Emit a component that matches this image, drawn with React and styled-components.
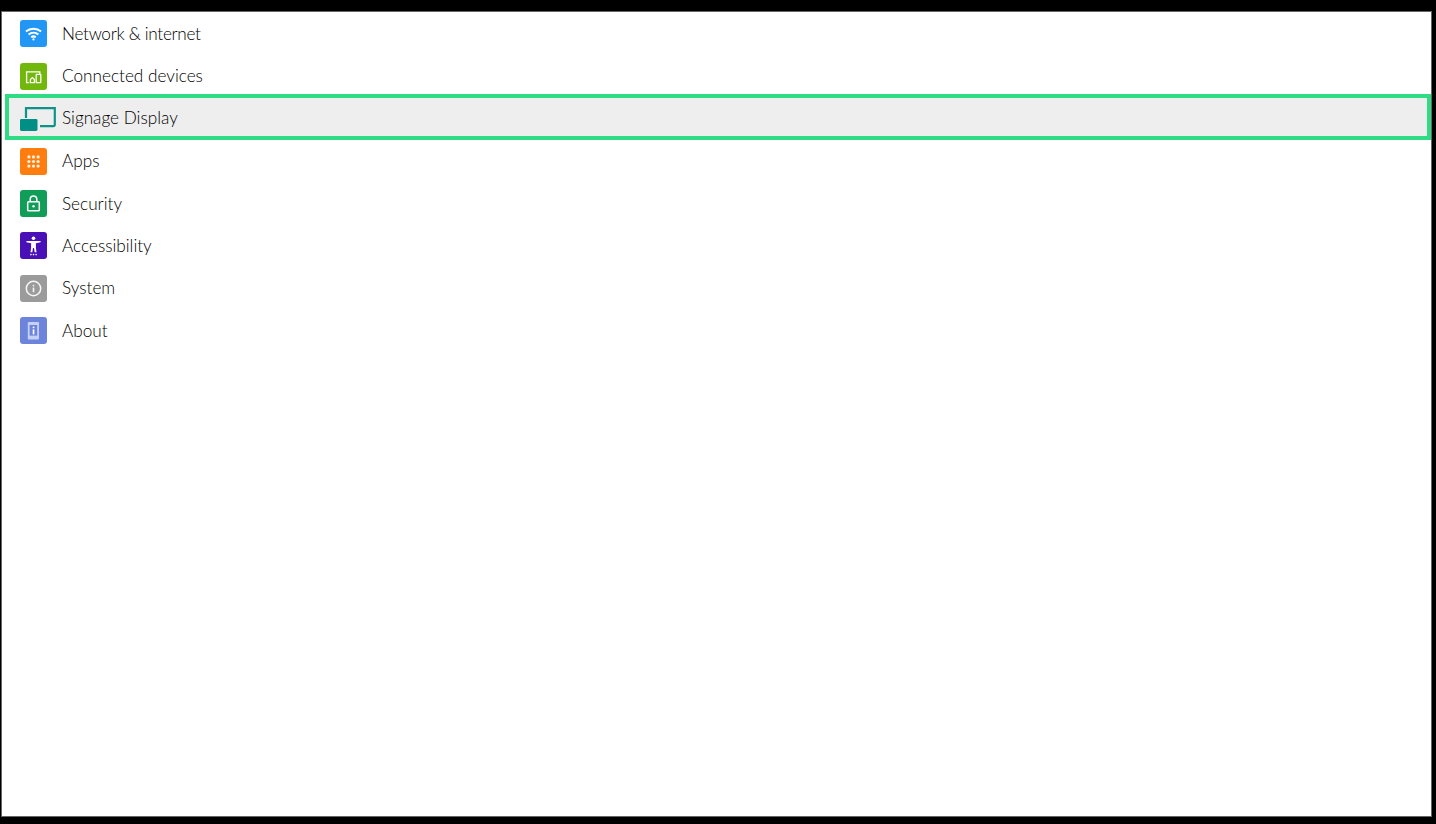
import React from 'react';
import styled, { createGlobalStyle } from 'styled-components';

const items = [
    { label: 'Network & internet', color: '#2196f5', icon: <WifiIcon />, tracking: '-0.3px' },
    { label: 'Connected devices', color: '#72b80c', icon: <DevicesIcon /> },
    { label: 'Signage Display', selected: true, icon: <SignageIcon /> },
    { label: 'Apps', color: '#ff7d0f', icon: <AppsIcon /> },
    { label: 'Security', color: '#0f9d58', icon: <LockIcon /> },
    { label: 'Accessibility', color: '#4a10b8', icon: <PersonIcon /> },
    { label: 'System', color: '#9b9b9b', icon: <InfoIcon /> },
    { label: 'About', color: '#6c84dc', icon: <PhoneIcon /> },
];

function WifiIcon() {
    return (
        <svg width="27" height="27" viewBox="0 0 27 27" fill="none" stroke="#fff" strokeWidth="2">
            <path d="M5.9 11.6c4.4-3.7 10.8-3.7 15.2 0" />
            <path d="M8.6 14.6c2.9-2.4 6.9-2.4 9.8 0" />
            <path d="M11.2 17.2c1.4-1 3.2-1 4.6 0" />
            <circle cx="13.5" cy="19.4" r="1.1" fill="#fff" stroke="none" />
        </svg>
    );
}

function DevicesIcon() {
    return (
        <svg width="27" height="27" viewBox="0 0 27 27" fill="none" stroke="#fff" strokeWidth="1.3">
            <path d="M8.8 19.6H6.6V8.9h13.2v2" />
            <rect x="16.2" y="11.4" width="4.6" height="8.3" rx=".4" />
            <path d="M10.4 19.6v-3l2-2 2 2v3z" />
        </svg>
    );
}

function SignageIcon() {
    return (
        <svg width="36" height="24" viewBox="0 0 36 24" fill="none">
            <path d="M6 11V1.1h28.8v16.4a1.6 1.6 0 0 1-1.6 1.6H20" stroke="#0e9389" strokeWidth="2.2" />
            <rect y="12" width="17.5" height="12" rx="1.4" fill="#008f84" />
        </svg>
    );
}

function AppsIcon() {
    return (
        <svg width="27" height="27" viewBox="0 0 27 27" fill="#fff0e0">
            {[8.9, 13.5, 18.1].map((y) =>
                [8.9, 13.5, 18.1].map((x) => <circle key={`${x}-${y}`} cx={x} cy={y} r="1.6" />)
            )}
        </svg>
    );
}

function LockIcon() {
    return (
        <svg width="27" height="27" viewBox="0 0 27 27" fill="none" stroke="#fff" strokeWidth="1.5">
            <rect x="7.7" y="11.7" width="11.6" height="9" rx=".8" />
            <path d="M10.2 11.7V9.2a3.3 3.3 0 0 1 6.6 0v2.5" />
            <circle cx="13.5" cy="16.2" r="1.2" fill="#fff" stroke="none" />
        </svg>
    );
}

function PersonIcon() {
    return (
        <svg width="27" height="27" viewBox="0 0 27 27" fill="#fff">
            <circle cx="13.5" cy="6.2" r="1.8" />
            <path d="M6.4 8.9h14.2v1.3l-4.7 1.1v4.4l.6 4.6h-1.8l-.7-4.4h-1l-.7 4.4h-1.8l.6-4.6v-4.4l-4.7-1.1z" />
            <circle cx="10.9" cy="22.6" r=".8" />
            <circle cx="13.5" cy="22.6" r=".8" />
            <circle cx="16.1" cy="22.6" r=".8" />
        </svg>
    );
}

function InfoIcon() {
    return (
        <svg width="27" height="27" viewBox="0 0 27 27" fill="none" stroke="#f6f6f6" strokeWidth="1.5">
            <circle cx="13.5" cy="13.5" r="7.2" />
            <circle cx="13.5" cy="10.6" r=".9" fill="#f6f6f6" stroke="none" />
            <path d="M13.5 12.6v4.6" strokeWidth="1.6" />
        </svg>
    );
}

function PhoneIcon() {
    return (
        <svg width="27" height="27" viewBox="0 0 27 27" fill="none">
            <rect x="7.8" y="5" width="11.2" height="17.6" rx=".8" fill="#c6d0f3" />
            <rect x="9.6" y="8" width="7.6" height="10.6" fill="#6c84dc" />
            <rect x="12.7" y="9.6" width="1.7" height="1.6" fill="#fff" />
            <rect x="12.7" y="12.4" width="1.7" height="5" fill="#fff" />
        </svg>
    );
}

const SettingsList = () => {
    return (
        <Panel>
            {items.map((item) => (
                <Row key={item.label} $selected={item.selected}>
                    {item.selected ? <SignageSlot>{item.icon}</SignageSlot> : <IconTile $color={item.color}>{item.icon}</IconTile>}
                    <Label $selected={item.selected} $tracking={item.tracking}>{item.label}</Label>
                </Row>
            ))}
        </Panel>
    );
};

export default function App() {
    return (
        <>
            <GlobalStyle />
            <SettingsList />
        </>
    );
}

// ------ UI Section
const GlobalStyle = createGlobalStyle`
    html, body {
        margin:0;
        height:100%;
        background:#000;
    }
`;

const Panel = styled.div`
    box-sizing:border-box;
    width:1431px;
    height:806px;
    margin:11px 0 0 1px;
    padding-top:0.6px;
    background:#fff;
    border:1px solid #666;
    font-family:Lato, sans-serif;
`;

const Row = styled.div`
    box-sizing:border-box;
    display:flex;
    align-items:center;
    height:${(p) => (p.$selected ? '46px' : '42.4px')};
    margin:${(p) => (p.$selected ? '-3.4px 0 0 3px' : '0')};
    padding-left:${(p) => (p.$selected ? '11px' : '18px')};
    padding-top:${(p) => (p.$selected ? '2px' : '0')};
    background:${(p) => (p.$selected ? '#eeeeee' : 'transparent')};
    border:${(p) => (p.$selected ? '4px solid #2fdc84' : 'none')};
`;

const SignageSlot = styled.div`
    flex:none;
    display:flex;
    margin-top:2px;
`;

const IconTile = styled.div`
    flex:none;
    width:27px;
    height:27px;
    border-radius:3px;
    background:${(p) => p.$color};
    display:flex;
`;

const Label = styled.span`
    margin-left:${(p) => (p.$selected ? '6px' : '15px')};
    margin-bottom:1px;
    font-size:17.2px;
    font-weight:300;
    letter-spacing:${(p) => p.$tracking || '0'};
    color:#000;
    white-space:nowrap;
`;
